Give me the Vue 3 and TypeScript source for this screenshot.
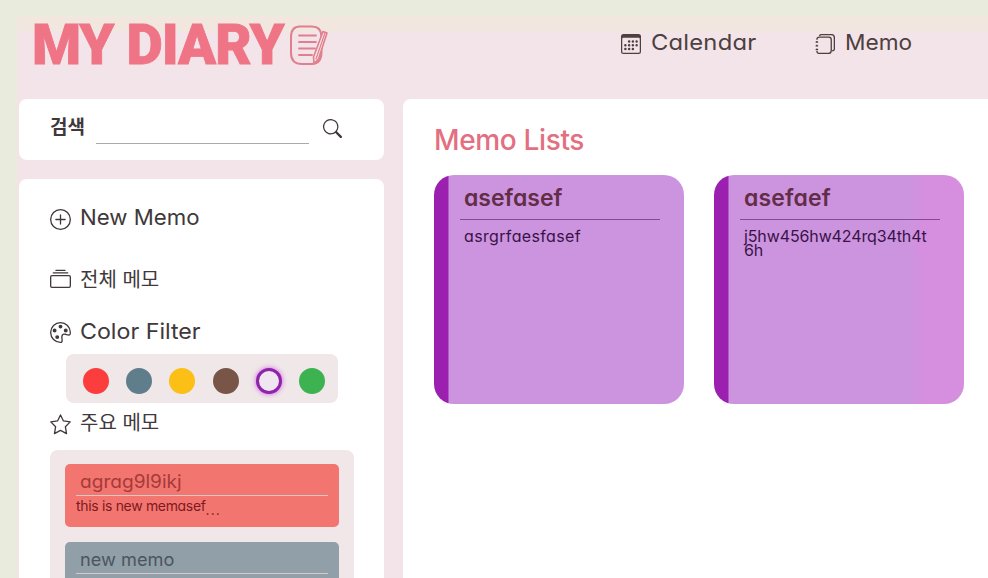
<script setup lang="ts">
interface Swatch { name: string; color: string; selected?: boolean }
interface Memo { title: string; body: string; cls: string }

const swatches: Swatch[] = [
  { name: 'red', color: '#fb3d3d' },
  { name: 'slate', color: '#607d8b' },
  { name: 'yellow', color: '#fcbf16' },
  { name: 'brown', color: '#795548' },
  { name: 'purple', color: '#8e24aa', selected: true },
  { name: 'green', color: '#3db250' },
]
const pinned: Memo[] = [
  { title: 'agrag9l9ikj', body: 'this is new memasef', cls: 'coral' },
  { title: 'new memo', body: '', cls: 'slate' },
]
const memos: Memo[] = [
  { title: 'asefasef', body: 'asrgrfaesfasef', cls: 'first' },
  { title: 'asefaef', body: 'j5hw456hw424rq34th4t6h', cls: 'second' },
]
</script>

<template>
  <div class="page">
    <header class="header">
      <div class="brand">
        <h1>MY DIARY</h1>
        <svg class="brand-icon" viewBox="0 0 40 42" fill="none" stroke="#e07f8d" stroke-width="2" stroke-linecap="round">
          <path d="M12 2.500H24Q33 2.500 33.500 12V28Q33.500 39.500 24 40H14Q3 40 3 29V13Q3 2.500 12 2.500Z" />
          <path d="M11 11.500H28M11 18H28M11 24.500H27M11 31H24" stroke-width="1.800" />
          <path d="M35 7.500L39 9L30.500 35L26 39.500L25.500 33Z" fill="#f8e5e6" stroke-width="1.600" stroke-linejoin="round" />
          <path d="M37 9L28 35" stroke-width="1.200" />
        </svg>
      </div>
      <nav class="nav">
        <a class="nav-calendar">
          <svg viewBox="0 0 16 16" fill="currentColor">
            <path d="M14 0H2a2 2 0 0 0-2 2v12a2 2 0 0 0 2 2h12a2 2 0 0 0 2-2V2a2 2 0 0 0-2-2zM1 3.857C1 3.384 1.448 3 2 3h12c.552 0 1 .384 1 .857v10.286c0 .473-.448.857-1 .857H2c-.552 0-1-.384-1-.857V3.857z" />
            <path d="M6.500 7a1 1 0 1 0 0-2 1 1 0 0 0 0 2zm3 0a1 1 0 1 0 0-2 1 1 0 0 0 0 2zm3 0a1 1 0 1 0 0-2 1 1 0 0 0 0 2zm-9 3a1 1 0 1 0 0-2 1 1 0 0 0 0 2zm3 0a1 1 0 1 0 0-2 1 1 0 0 0 0 2zm3 0a1 1 0 1 0 0-2 1 1 0 0 0 0 2zm3 0a1 1 0 1 0 0-2 1 1 0 0 0 0 2zm-9 3a1 1 0 1 0 0-2 1 1 0 0 0 0 2zm3 0a1 1 0 1 0 0-2 1 1 0 0 0 0 2zm3 0a1 1 0 1 0 0-2 1 1 0 0 0 0 2z" />
          </svg>
          <span>Calendar</span>
        </a>
        <a class="nav-memo">
          <svg viewBox="0 0 16 16" fill="none" stroke="currentColor" stroke-width="1.050">
            <path d="M3.500 1.500Q4 .5 5 .5H13Q15.500 .5 15.500 3V12Q15.500 13.500 13.500 13.500" />
            <path d="M1.500 4.500Q1.500 2.500 3.500 2.500H11Q13 2.500 13 4.500V13Q13 15.500 11 15.500H3.500Q1.500 15.500 1.500 13.500" />
            <path d="M.5 6.500H2.500M.5 9.500H2.500M.5 12.500H2.500M1.500 5.500V7M1.500 8.500V10M1.500 11.500V13" />
          </svg>
          <span>Memo</span>
        </a>
      </nav>
    </header>

    <div class="columns">
      <aside class="sidebar">
        <section class="panel search">
          <label>검색</label>
          <div class="search-line"></div>
          <svg viewBox="0 0 16 16" fill="currentColor">
            <path d="M11.742 10.344a6.500 6.500 0 1 0-1.397 1.398h-.001c.030.040.062.078.098.115l3.850 3.850a1 1 0 0 0 1.415-1.414l-3.850-3.850a1.007 1.007 0 0 0-.115-.1zM12 6.500a5.500 5.500 0 1 1-11 0 5.500 5.500 0 0 1 11 0z" />
          </svg>
        </section>

        <section class="panel menu">
          <div class="item new">
            <svg viewBox="0 0 16 16" fill="currentColor">
              <path d="M8 15A7 7 0 1 1 8 1a7 7 0 0 1 0 14zm0 1A8 8 0 1 0 8 0a8 8 0 0 0 0 16z" />
              <path d="M8 4a.5.5 0 0 1 .5.5v3h3a.5.5 0 0 1 0 1h-3v3a.5.5 0 0 1-1 0v-3h-3a.5.5 0 0 1 0-1h3v-3A.5.5 0 0 1 8 4z" />
            </svg>
            <span>New Memo</span>
          </div>
          <div class="item all">
            <svg viewBox="0 0 16 16" fill="currentColor">
              <path d="M2.500 3.500a.5.5 0 0 1 0-1h11a.5.5 0 0 1 0 1h-11zm2-2a.5.5 0 0 1 0-1h7a.5.5 0 0 1 0 1h-7zM0 13a1.500 1.500 0 0 0 1.500 1.500h13A1.500 1.500 0 0 0 16 13V6a1.500 1.500 0 0 0-1.500-1.500h-13A1.500 1.500 0 0 0 0 6v7zm1.500.5A.5.5 0 0 1 1 13V6a.5.5 0 0 1 .5-.5h13a.5.5 0 0 1 .5.5v7a.5.5 0 0 1-.5.5h-13z" />
            </svg>
            <span class="ko">전체 메모</span>
          </div>
          <div class="item filter">
            <svg viewBox="0 0 16 16" fill="currentColor">
              <path d="M8 5a1.500 1.500 0 1 0 0-3 1.500 1.500 0 0 0 0 3zm4 3a1.500 1.500 0 1 0 0-3 1.500 1.500 0 0 0 0 3zM5 6.500a1.500 1.500 0 1 1-3 0 1.500 1.500 0 0 1 3 0zm.5 6.500a1.500 1.500 0 1 0 0-3 1.500 1.500 0 0 0 0 3z" />
              <path d="M16 8c0 3.150-1.866 2.585-3.567 2.070C11.420 9.763 10.465 9.473 10 10c-.603.683-.475 1.819-.351 2.920C9.826 14.495 9.996 16 8 16a8 8 0 1 1 8-8zm-8 7c.611 0 .654-.171.655-.176.078-.146.124-.464.070-1.119-.014-.168-.037-.37-.061-.591-.052-.464-.112-1.005-.118-1.462-.010-.707.083-1.610.704-2.314.369-.417.845-.578 1.272-.618.404-.038.812.026 1.160.104.343.077.702.186 1.025.284l.028.008c.346.105.658.199.953.266.653.148.904.083.991.024C14.717 9.380 15 9.161 15 8a7 7 0 1 0-7 7z" />
            </svg>
            <span>Color Filter</span>
          </div>
          <div class="swatches">
            <i v-for="s in swatches" :key="s.name" :class="{ selected: s.selected }" :style="{ borderColor: s.color, backgroundColor: s.selected ? '' : s.color }"></i>
          </div>
          <div class="item starred">
            <svg viewBox="0 0 16 16" fill="none" stroke="currentColor" stroke-linejoin="round">
              <path d="M8 .7L10.250 5.300L15.400 6L11.700 9.650L12.600 14.900L8 12.500L3.400 14.900L4.300 9.650L.6 6L5.750 5.300Z" />
            </svg>
            <span class="ko">주요 메모</span>
          </div>
          <div class="pinned">
            <article v-for="m in pinned" :key="m.title" :class="['pin', m.cls]">
              <h3><span>{{ m.title }}</span></h3>
              <p v-if="m.body"><span>{{ m.body }}</span><span class="dots">...</span></p>
            </article>
          </div>
        </section>
      </aside>

      <main class="panel main">
        <h2>Memo Lists</h2>
        <div class="cards">
          <article v-for="m in memos" :key="m.title" :class="['card', m.cls]">
            <h3>{{ m.title }}</h3>
            <p>{{ m.body }}</p>
          </article>
        </div>
      </main>
    </div>
  </div>
</template>

<style>
body { overflow: hidden; }
</style>

<style scoped>
* { box-sizing: border-box; margin: 0; padding: 0; }
.page {
  width: 988px; height: 578px; overflow: hidden;
  display: flex; flex-direction: column;
  font-family: Inter, "Noto Sans CJK KR", sans-serif;
  font-feature-settings: "cv11";
  color: #40383a;
  background:
    linear-gradient(90deg, #e9ebdd 15px, transparent 18px),
    linear-gradient(180deg, #e9ebdd 14px, #f2e7df 18px, #f2e7df 29px, #f2e4e8 34px);
}
.header { flex: none; height: 99px; display: flex; justify-content: space-between; }
.brand { display: flex; padding: 24px 0 0 32px; }
h1 {
  width: 256px; height: 42px; line-height: 42px; white-space: nowrap;
  font-family: Roboto, sans-serif; font-weight: 900; font-size: 56px; letter-spacing: -1px; color: #ef7485;
  -webkit-text-stroke: .8px #ef7485;
}
.brand-icon { flex: none; width: 40px; height: 42px; }
.nav { display: flex; padding: 27px 0 0; width: 367px; color: #4d403e; }
.nav a { display: flex; height: 30px; align-items: center; gap: 10px; font-size: 22px; line-height: 30px; }
.nav svg { flex: none; width: 20px; height: 20px; margin-top: 4px; }
.nav span, .item span { display: inline-block; font-weight: 400; transform-origin: left center; }
.nav-calendar { width: 194px; letter-spacing: .2px; }
.nav-calendar span { transform: scaleX(1.08); }
.nav-memo span { transform: scaleX(1.03); }
.columns { display: flex; gap: 19px; padding-left: 19px; flex: 1; min-height: 0; }
.sidebar { width: 365px; flex: none; display: flex; flex-direction: column; gap: 19px; }
.panel { background: #fff; border-radius: 8px; }
.search { flex: none; height: 61px; display: flex; padding-left: 31px; }
.search label { width: 46px; padding-top: 16px; line-height: 26px; font-size: 19px; font-weight: 700; white-space: nowrap; }
.search-line { width: 213px; height: 45px; border-bottom: 1px solid #aaa; }
.search svg { width: 19px; height: 19px; margin: 20px 0 0 14px; }
.menu { flex: 1; min-height: 0; overflow: hidden; padding: 23px 0 0 31px; border-radius: 8px 8px 0 0; }
.item { display: flex; height: 30px; line-height: 30px; font-size: 22px; gap: 9px; align-items: center; white-space: nowrap; }
.item svg { flex: none; width: 21px; height: 21px; margin-top: 4px; }
.item .ko { font-size: 20px; padding-top: 2px; }
.new span { transform: scaleX(1.01); }
.all { margin-top: 32px; }
.all svg { margin-top: 1px; }
.filter { margin-top: 22px; }
.filter svg { margin-top: 3px; }
.filter span { transform: scaleX(1.055); }
.swatches { width: 272px; height: 49px; margin: 8px 0 0 16px; padding: 4px 13px 0 17px; display: flex; align-items: center; justify-content: space-between; background: #efe7e8; border-radius: 8px; }
.swatches i { width: 26px; height: 26px; border-radius: 50%; border: 3px solid; }
.swatches .selected { background: #f0e6f1; box-shadow: 0 0 5px #d35ae6; }
.starred { margin-top: 4px; }
.pinned { width: 304px; margin-top: 13px; padding: 14px 15px; background: #f1e6e8; border-radius: 8px; display: flex; flex-direction: column; gap: 15px; }
.pin { height: 63px; border-radius: 5px; padding: 4px 11px 0; }
.coral { background: #f37570; color: #7c1a20; }
.pin.slate { background: #919fa8; color: #4b5560; }
.pin h3 { height: 28px; line-height: 27px; font-weight: 400; font-size: 18px; padding-left: 4px; border-bottom: 1px solid #ddc8c8; }
.pin h3 span { display: inline-block; transform-origin: left; transform: scaleX(1.01); }
.coral h3 { color: #a53b38; }
.coral h3 span { transform: scaleX(1.06); }
.pin p { font-size: 14px; line-height: 20px; letter-spacing: -.33px; }
.pin .dots { letter-spacing: 1px; position: relative; top: 4px; }
.main { flex: 1; padding: 25px 0 0 31px; border-radius: 8px 0 0 0; }
h2 { height: 32px; line-height: 32px; font-size: 28px; font-weight: 500; color: #e36f80; white-space: nowrap; letter-spacing: -.35px; }
.cards { display: flex; gap: 30px; margin-top: 19px; }
.card { flex: none; width: 250px; height: 229px; border-radius: 20px; overflow: hidden; background: linear-gradient(90deg, #9b20b0 14px, #cc94df 15px); padding: 9px 24px 0 26px; color: #391248; }
.card.second { background: linear-gradient(90deg, #9b20b0 14px, #cc94df 15px, #cc94df 78%, #d68edf 84%); }
.card h3 { height: 36px; line-height: 29px; padding-left: 4px; border-bottom: 1px solid #854b91; color: #632d47; font-size: 23px; font-weight: 600; }
.card.second h3 { letter-spacing: .15px; }
.card p { padding: 9px 8px 0 4px; font-size: 16px; line-height: 14px; letter-spacing: .35px; word-break: break-all; }
.card.second p { letter-spacing: -.12px; }
</style>
